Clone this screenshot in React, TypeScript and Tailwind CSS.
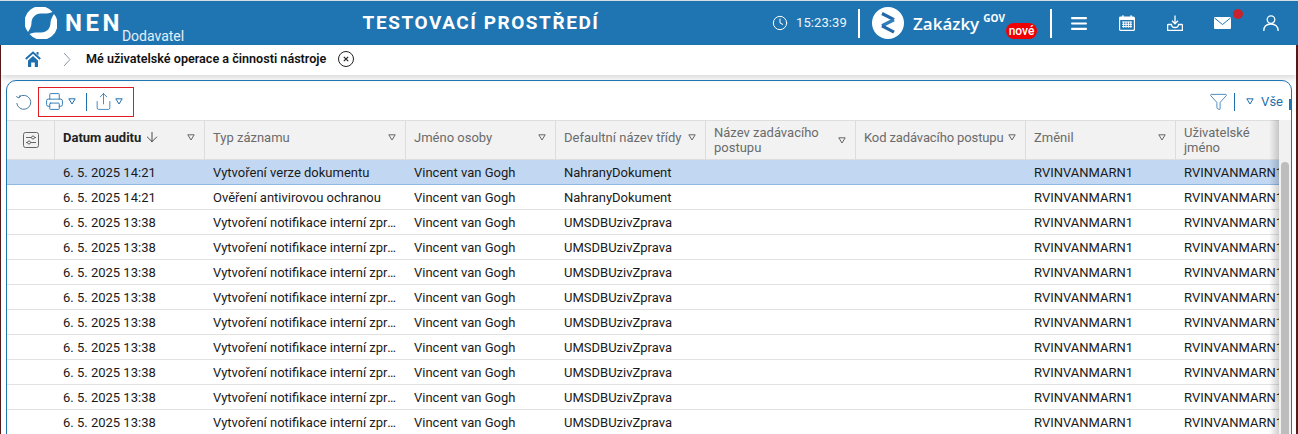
import { Printer, Share, Filter, Clock, ArrowDown } from "lucide-react";

const columns = [
  { label: "Datum auditu", width: "w-[150px]", bold: true },
  { label: "Typ záznamu", width: "w-[201px]" },
  { label: "Jméno osoby", width: "w-[150px]" },
  { label: "Defaultní název třídy", width: "w-[150px]" },
  { label: "Název zadávacího postupu", width: "w-[150px]", wrap: true },
  { label: "Kod zadávacího postupu", width: "w-[170px]", tight: true },
  { label: "Změnil", width: "w-[150px]" },
];

const notif = ["6. 5. 2025 13:38", "Vytvoření notifikace interní zpráv", "Vincent van Gogh", "UMSDBUzivZprava"];
const rows = [
  ["6. 5. 2025 14:21", "Vytvoření verze dokumentu", "Vincent van Gogh", "NahranyDokument"],
  ["6. 5. 2025 14:21", "Ověření antivirovou ochranou", "Vincent van Gogh", "NahranyDokument"],
  ...Array.from({ length: 9 }, () => notif),
];

function Caret({ className = "" }: { className?: string }) {
  return (
    <svg width="8" height="7" viewBox="0 0 8 7" className={`shrink-0 ${className}`} fill="none" stroke="currentColor" strokeWidth="1">
      <path d="M.8 .8h6.4L4 6z" />
    </svg>
  );
}

function NenLogo() {
  const arc = "M3 25 A15.8 15.8 0 0 1 27.5 5 C23 7 20 6.500 16 6.500 C10 6.500 6.500 11 6.500 16 C6.500 19 5 22 3 25z";
  return (
    <svg width="32" height="32" viewBox="0 0 32 32" className="shrink-0" fill="#fff">
      <path d={arc} />
      <path d={arc} transform="rotate(180 16 16)" />
    </svg>
  );
}

function ZakazkyLogo() {
  return (
    <svg width="32" height="32" viewBox="0 0 32 32" className="shrink-0">
      <circle cx="16" cy="16" r="16" fill="#fff" />
      <path d="M10 6.500 L22 12.700" fill="none" stroke="#2368a8" strokeWidth="3.200" />
      <path d="M22 12.700 L10 18.800" fill="none" stroke="#2f7fbd" strokeWidth="3.200" />
      <path d="M10 18.800 L22 25.200" fill="none" stroke="#2368a8" strokeWidth="3.200" />
    </svg>
  );
}

function MenuIcon() {
  return (
    <svg width="16" height="13" viewBox="0 0 16 13" fill="#fff" className="shrink-0">
      <rect y="0" width="16" height="2.200" rx="1" />
      <rect y="5.400" width="16" height="2.200" rx="1" />
      <rect y="10.800" width="16" height="2.200" rx="1" />
    </svg>
  );
}

function CalendarIcon() {
  return (
    <svg width="16" height="16" viewBox="0 0 16 16" className="shrink-0">
      <rect x=".6" y="2" width="14.800" height="13.400" rx="1" fill="none" stroke="#fff" strokeWidth="1.200" />
      <rect x="1" y="2" width="14" height="3" fill="#fff" />
      <rect x="3.200" y=".3" width="1.400" height="3" fill="#fff" />
      <rect x="11.400" y=".3" width="1.400" height="3" fill="#fff" />
      <path d="M3 7h10M3 9.300h10M3 11.600h10M4.600 6.500v6.200M7 6.500v6.200M9.400 6.500v6.200M11.800 6.500v6.200" stroke="#fff" strokeWidth="1" />
    </svg>
  );
}

function TrayIcon() {
  return (
    <svg width="16" height="16" viewBox="0 0 16 16" fill="none" stroke="#fff" strokeWidth="1.300" className="shrink-0">
      <path d="M8 .5v8M5 5.800 8 8.800l3-3" />
      <path d="M4.500 9.500H1.200a.6 .6 0 0 0-.6 .6V15.400H15.400V10.100a.6 .6 0 0 0-.6-.6H11.500C11.500 11.800 9.800 12.500 8 12.500 6.200 12.500 4.500 11.800 4.500 9.500z" />
    </svg>
  );
}

function MailIcon() {
  return (
    <svg width="17" height="12" viewBox="0 0 17 12" className="shrink-0">
      <rect width="17" height="12" rx="1" fill="#fff" />
      <path d="M.5 1 8.500 7.500 16.500 1" fill="none" stroke="#1f75b2" strokeWidth="1" />
    </svg>
  );
}

function UserIcon() {
  return (
    <svg width="16" height="16" viewBox="0 0 16 16" fill="none" stroke="#fff" strokeWidth="1.300" className="shrink-0">
      <circle cx="8" cy="4.600" r="3.800" />
      <path d="M.8 16c0-4.500 3-7 7.200-7s7.200 2.500 7.200 7" />
    </svg>
  );
}

export default function App() {
  return (
    <div className="h-[434px] overflow-hidden bg-white text-[13px] text-[#1a1a1a] font-['Roboto',sans-serif]">
      {/* top bar */}
      <div className="h-[45px] border-t border-[#d5dde3] bg-[#1f75b2] flex items-center text-white">
        <div className="w-[340px] pl-[25px] flex items-center shrink-0">
          <NenLogo />
          <span className="ml-[8px] text-[24px] font-bold tracking-[3.5px] leading-none">NEN</span>
          <span className="self-end -mb-[6px] -ml-[1px] text-[14px] leading-[18px] text-[#e3eef6]">Dodavatel</span>
        </div>
        <div className="w-[282px] text-[19px] font-bold tracking-[1.55px] text-center whitespace-nowrap shrink-0">TESTOVACÍ PROSTŘEDÍ</div>
        <div className="ml-[150px] w-[86px] flex items-center gap-[8px] shrink-0">
          <Clock size={16} strokeWidth={1.5} />
          <span className="text-[13px] text-[#eef5fa] tracking-[0.1px]">15:23:39</span>
        </div>
        <div className="w-[2px] h-[29px] bg-white shrink-0" />
        <div className="relative w-[190px] pl-[12px] flex items-center shrink-0">
          <ZakazkyLogo />
          <span className="ml-[9px] text-[17px] font-semibold font-['Open_Sans',sans-serif] leading-none">Zakázky</span>
          <span className="ml-[4px] mb-[10px] text-[10px] font-bold font-['Open_Sans',sans-serif] leading-none">GOV</span>
          <span className="absolute left-[146px] top-[16px] h-[16px] w-[31px] rounded-full bg-[#f00000] text-[12px] font-medium leading-[16px] text-center">nové</span>
        </div>
        <div className="w-[2px] h-[29px] bg-white shrink-0" />
        <div className="ml-[19px] flex items-center gap-[32px] shrink-0">
          <MenuIcon />
          <CalendarIcon />
          <TrayIcon />
          <span className="relative -ml-[1px] flex">
            <MailIcon />
            <span className="absolute -right-[12px] -top-[8px] w-[10px] h-[10px] rounded-full bg-[#c8232c]" />
          </span>
          <UserIcon />
        </div>
      </div>

      <div className="h-[389px] flex border-l border-r-2 border-[#5a1a1a]">
        <div className="flex-1 min-w-0">
          {/* breadcrumb */}
          <div className="h-[30px] pb-[2px] flex items-center shadow-[0_3px_6px_rgba(0,0,0,0.15)] text-[#111]">
            <svg width="16" height="16" viewBox="0 0 16 16" className="ml-[24px] shrink-0">
              <path d="M.8 8 8 1.500 15.200 8" fill="none" stroke="#1f6fae" strokeWidth="2" />
              <path d="M11.500 1h2v3.500l-2-1.800z" fill="#1f6fae" />
              <path d="M3 9.500 8 5l5 4.500V16H9.800v-4.500H6.200V16H3z" fill="#1f6fae" />
            </svg>
            <svg width="8" height="15" viewBox="0 0 8 15" fill="none" stroke="#8a9aa8" className="ml-[22px] shrink-0">
              <path d="M1 1l6 6.500-6 6.500" />
            </svg>
            <span className="ml-[15px] text-[12.6px] font-semibold whitespace-nowrap">Mé uživatelské operace a činnosti nástroje</span>
            <svg width="16" height="16" viewBox="0 0 16 16" fill="none" stroke="#222" className="ml-[12px] shrink-0">
              <circle cx="8" cy="8" r="7.500" />
              <path d="M5.800 5.800l4.400 4.400M10.200 5.800l-4.400 4.400" strokeWidth="1.200" />
            </svg>
          </div>

          {/* panel */}
          <div className="mt-[5px] ml-[5px] mr-[4px] h-[400px] border border-[#1f75b2] rounded-t-[10px] overflow-hidden">
            <div className="relative h-[39px] pt-[2px] flex items-center text-[#1f6fae]">
              <svg width="17" height="16" viewBox="0 0 17 16" fill="none" stroke="#4a7d9e" className="ml-[8px] shrink-0">
                <path d="M4 3.200A7 7 0 1 1 1.800 9" />
                <path d="M1.200 2.500 4 4l1.200-3" />
              </svg>
              <div className="ml-[6px] w-[96px] h-[30px] border border-[#e01b24] flex items-center">
                <Printer size={19} strokeWidth={1.1} className="ml-[6px] shrink-0" />
                <Caret className="ml-[4px]" />
                <span className="ml-[10px] w-px h-[18px] bg-[#1f6fae]" />
                <Share size={19} strokeWidth={1} className="ml-[7px] shrink-0" />
                <Caret className="ml-[2px]" />
              </div>
              <div className="ml-auto flex items-center pr-[8px]">
                <Filter size={19} strokeWidth={1} />
                <span className="ml-[6px] w-px h-[18px] bg-[#1f6fae]" />
                <Caret className="ml-[11px]" />
                <span className="ml-[7px] text-[13px]">Vše</span>
              </div>
              <span className="absolute right-0 top-[18px] w-[2px] h-[11px] bg-[#1f75b2]" />
            </div>

            <div className="flex h-[360px]">
              <div className="relative w-[1272px] shrink-0 overflow-hidden">
                {/* header row */}
                <div className="flex h-[40px] bg-[#f2f2f2] border-t border-b border-[#dedede] text-[#6b6b6b] leading-[15px]">
                  <div className="w-[48px] shrink-0 border-r border-[#dcdcdc] flex items-center justify-center">
                    <svg width="16" height="16" viewBox="0 0 16 16" fill="none" stroke="#666">
                      <rect x=".5" y=".5" width="15" height="15" rx="2" />
                      <path d="M3 5.500h10M3 10.500h10" />
                      <circle cx="10" cy="5.500" r="1.500" fill="#f2f2f2" />
                      <circle cx="6" cy="10.500" r="1.500" fill="#f2f2f2" />
                    </svg>
                  </div>
                  {columns.map((c) => (
                    <div key={c.label} className={`${c.width} shrink-0 border-r border-[#dcdcdc] pl-[8px] pr-[9px] flex items-center justify-between ${c.wrap ? "" : "pb-[6px]"}`}>
                      <span className={c.bold ? "font-bold text-[#222] flex items-center gap-[3px]" : c.wrap ? "" : c.tight ? "whitespace-nowrap tracking-[-0.12px]" : "whitespace-nowrap"}>
                        {c.label}
                        {c.bold && <ArrowDown size={16} strokeWidth={1.2} />}
                      </span>
                      <Caret className="text-[#666]" />
                    </div>
                  ))}
                  <div className="flex-1 pl-[8px] flex items-center">Uživatelské<br />jméno</div>
                </div>
                {/* rows */}
                {rows.map((r, i) => (
                  <div key={i} className={`flex h-[25px] pt-[2px] items-center border-b whitespace-nowrap ${i === 0 ? "bg-[#c2d8f2] border-[#8fb8e2]" : "border-[#e2e2e2]"}`}>
                    <div className="w-[48px] shrink-0" />
                    <div className="w-[150px] shrink-0 pl-[8px]">{r[0]}</div>
                    <div className="w-[201px] shrink-0 pl-[8px] pr-[8px] truncate">{r[1]}</div>
                    <div className="w-[150px] shrink-0 pl-[8px]">{r[2]}</div>
                    <div className="w-[150px] shrink-0 pl-[8px]">{r[3]}</div>
                    <div className="w-[150px] shrink-0" />
                    <div className="w-[170px] shrink-0" />
                    <div className="w-[150px] shrink-0 pl-[8px]">RVINVANMARN1</div>
                    <div className="w-[103px] shrink-0 pl-[8px] overflow-hidden">RVINVANMARN1</div>
                  </div>
                ))}
                {/* fade at the clipped right edge */}
                <div className="absolute right-0 top-0 bottom-0 w-[10px] bg-gradient-to-r from-transparent to-[rgba(0,0,0,0.18)]" />
              </div>
              <div className="flex-1 bg-[#f1f1f1] pt-[42px] pl-[2px]">
                <div className="w-[8px] h-[300px] rounded-full bg-[#bdbdbd]" />
              </div>
            </div>
          </div>
        </div>
      </div>
    </div>
  );
}
